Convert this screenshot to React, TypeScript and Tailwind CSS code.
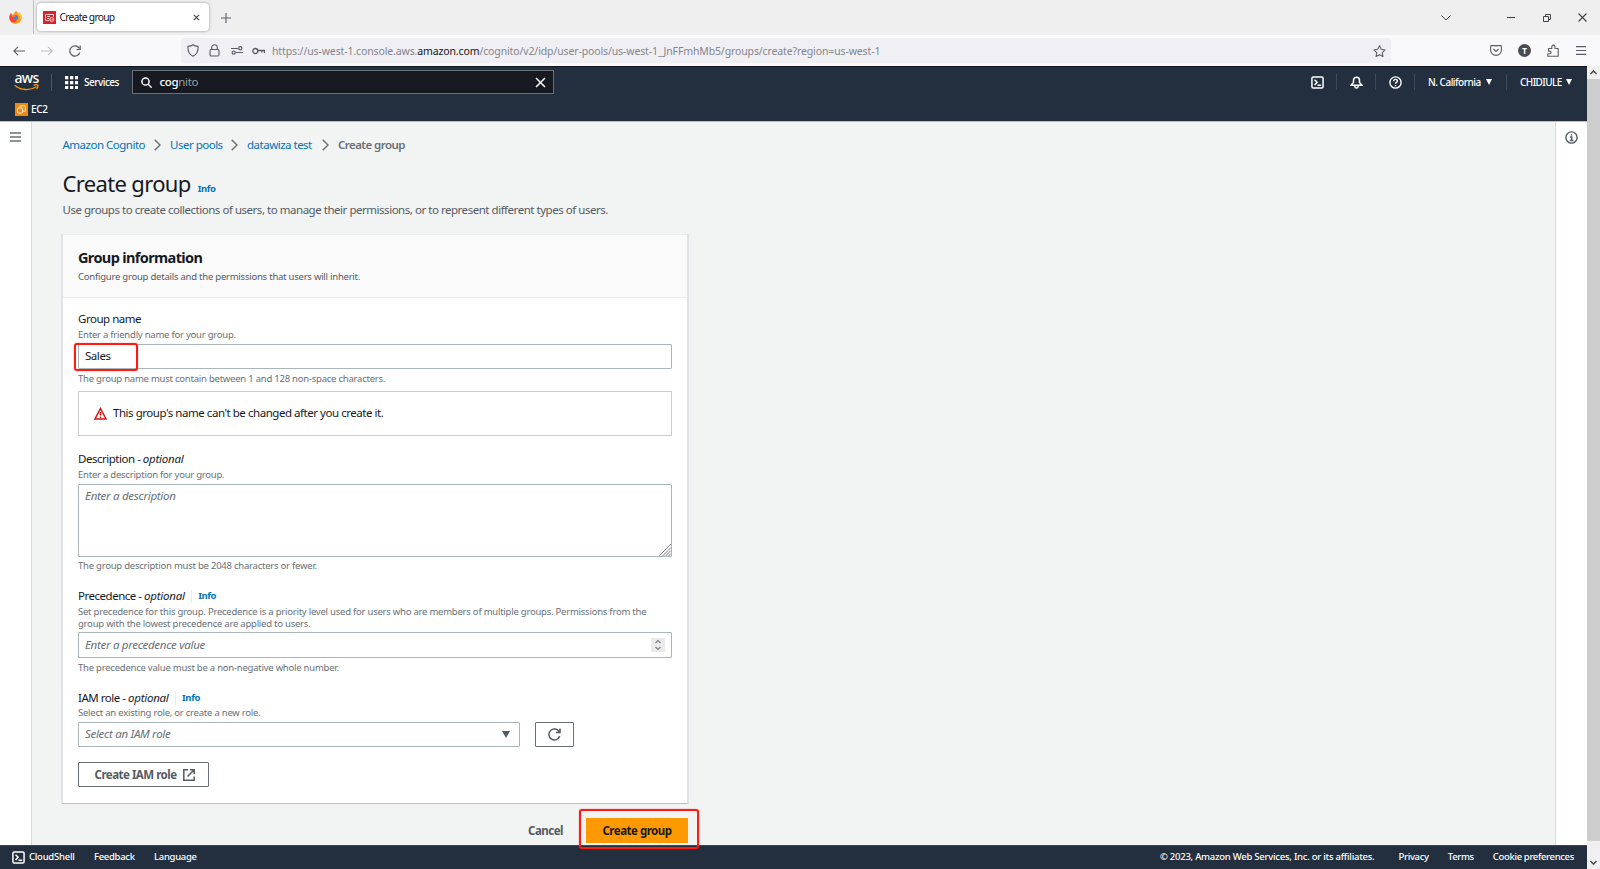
import { useState, type ReactNode } from 'react'
import clsx from 'clsx'

const FOOTER_LINKS = ['Terms', 'Cookie preferences']

function Caret({ className = 'h-[6px] w-[6px]' }: { className?: string }) {
  return (
    <svg viewBox="0 0 8 7" preserveAspectRatio="none" className={clsx('shrink-0', className)} fill="currentColor">
      <path d="M0 0h8L4 7z" />
    </svg>
  )
}

function CloudShellIcon() {
  return (
    <svg viewBox="0 0 14 14" className="size-[13px] shrink-0" fill="none" stroke="currentColor" strokeWidth="1.6">
      <rect x="1" y="1" width="12" height="12" rx="1.5" />
      <path d="M3.8 4 6.6 6.8 3.8 9.6M7 10h4" />
    </svg>
  )
}

function InfoLink() {
  return <a className="text-[9.5px] font-bold tracking-[-0.4px] text-[#0073bb]">Info</a>
}

function BrowserTabs() {
  return (
    <div className="flex h-[35px] items-center bg-[#efefef] text-[#15141a]">
      <div className="flex h-[34px] w-[34px] items-center justify-center self-start border-r border-[#c2c2c5]">
        <svg viewBox="0 0 16 16" className="ml-[-3px] size-[13px]">
          <path d="M15.3 5.4C14.7 3.8 13.4 2 12.3 1.6c.8 1.2 1 2 1 2.4C11.8 1.8 10 1.7 8.7 0 6.5 1.5 6 3 5.8 4.200c-.8 0-1.5.3-2.100.6C3 4 3 2.800 3.100 2.200 1.300 3.400.400 6 .4 8.300a7.600 7.600 0 0 0 15.200 0c0-1-.1-2-.3-2.900z" fill="#ff9a1f" />
          <path d="M.4 8.300C.5 6 1.300 3.800 2.600 2.800c0 1 .4 1.800 1.200 2.300-.4 1-.2 1.700 1 2.300-.9 3 2.500 5 5 3.600-1 2.400-4 3.500-6.500 2.900A7.500 7.500 0 0 1 .4 8.300z" fill="#ff3b3b" />
          <path d="M12.300 1.600c3 1.800 3.800 5.800 2.700 8.600-1.300-1-1.200-3-2-4.400C12.300 4.600 10 3 9.800 1.300c1.200 1.200 2.900 1.600 3.500 2.700 0-.8-.4-1.700-1-2.400z" fill="#ffd43a" />
          <circle cx="8" cy="8" r="3.1" fill="#4a7ed0" />
          <path d="M4.800 7.400c1.400-.4 3-.2 3.700-1.200-1-.8-2.100-1-3.300-.6z" fill="#ff7a22" />
        </svg>
      </div>
      <div className="ml-[3px] mb-px flex h-[28px] w-[172px] items-center rounded-[4px] bg-white pr-[9px] pl-[6px] shadow-[0_0_3px_rgba(0,0,0,0.4)]">
        <svg viewBox="0 0 13 13" className="size-[13px]" fill="none" stroke="#fff">
          <rect width="13" height="13" fill="#d6242d" stroke="none" />
          <path d="M2.5 9.5v-6h8v2.5M2.5 9.5H6M4 5.5h3M4 7.5h2" strokeWidth=".8" />
          <circle cx="8.8" cy="8.5" r="2" strokeWidth=".8" />
          <path d="m8 8.500.6.7 1.200-1.300" strokeWidth=".7" />
        </svg>
        <span className="mt-px ml-[3.5px] text-[10.25px] tracking-[-0.7px]">Create group</span>
        <svg viewBox="0 0 8 8" className="ml-auto size-[7px]" stroke="#3a3a44" strokeWidth="1.2">
          <path d="m1 1 6 6M7 1 1 7" />
        </svg>
      </div>
      <svg viewBox="0 0 10 10" className="ml-[12px] size-[10px]" stroke="#5b5b66" strokeWidth="1.1">
        <path d="M5 0v10M0 5h10" />
      </svg>
      <div className="ml-auto flex items-center pr-[13px] text-[#43434d]">
        <svg viewBox="0 0 10 6" className="h-[6px] w-[10px]" fill="none" stroke="currentColor">
          <path d="m.5.5 4.5 4.5L9.5.5" />
        </svg>
        <svg viewBox="0 0 8 8" className="ml-[56px] size-[8px]" stroke="currentColor" strokeWidth="1.1">
          <path d="M0 3.500h8" />
        </svg>
        <svg viewBox="0 0 8 8" className="ml-[28px] size-[8px]" fill="none" stroke="currentColor">
          <path d="M.5 2.500h5v5h-5zM2.500 2.500v-2h5v5h-2" />
        </svg>
        <svg viewBox="0 0 9 9" className="ml-[27px] size-[9px]" stroke="currentColor" strokeWidth="1.1">
          <path d="m.5.5 8 8M8.5.5l-8 8" />
        </svg>
      </div>
    </div>
  )
}

function BrowserToolbar() {
  return (
    <div className="flex h-[31px] items-center bg-[#f9f9fb] text-[#5b5b66]">
      <svg viewBox="0 0 12 10" className="ml-[13px] h-[10px] w-[12px]" fill="none" stroke="currentColor" strokeWidth="1.1">
        <path d="M12 5H1M5 .8.8 5 5 9.2" />
      </svg>
      <svg viewBox="0 0 12 10" className="ml-[16px] h-[10px] w-[12px]" fill="none" stroke="#bdbdc4" strokeWidth="1.1">
        <path d="M0 5h11M7 .8 11.2 5 7 9.2" />
      </svg>
      <svg viewBox="0 0 12 12" className="ml-[16px] size-[12px]" fill="none" stroke="currentColor" strokeWidth="1.2">
        <path d="M10.8 7.5A5.1 5.1 0 1 1 10.3 3.4M11.2.5v4H7.5" />
      </svg>
      <div className="ml-[100px] flex h-[25px] w-[1210px] items-center rounded-[3px] bg-[#f0f0f4] pr-[5px] pl-[6px]">
        <svg viewBox="0 0 12 13" className="h-[13px] w-[12px]" fill="none" stroke="currentColor" strokeWidth="1.1">
          <path d="M6 .7C4.6 1.8 3 2.2 1 2.4 .6 7 2.2 10.5 6 12.3 9.8 10.5 11.4 7 11 2.4 9 2.2 7.4 1.8 6 .7z" />
        </svg>
        <svg viewBox="0 0 11 13" className="ml-[10px] h-[13px] w-[11px]" fill="none" stroke="currentColor" strokeWidth="1.1">
          <rect x="1" y="5.5" width="9" height="6.5" rx="1.2" />
          <path d="M2.7 5.5V3.5a2.8 2.8 0 0 1 5.6 0v2" />
        </svg>
        <svg viewBox="0 0 12 9" className="ml-[11px] h-[9px] w-[12px]" fill="none" stroke="currentColor" strokeWidth="1.2">
          <path d="M0 2.500h7M5 6.500h7" />
          <circle cx="9.3" cy="2.3" r="1.6" />
          <circle cx="2.7" cy="6.6" r="1.6" />
        </svg>
        <svg viewBox="0 0 13 8" className="ml-[9px] h-[8px] w-[13px]" fill="none" stroke="currentColor" strokeWidth="1.3">
          <circle cx="3.3" cy="4" r="2.5" />
          <path d="M5.8 3.5H12.4V6M9.8 3.5v2" />
        </svg>
        <span className="mt-[2px] ml-[7px] text-[10.5px] tracking-[-0.125px] whitespace-nowrap text-[#84848c]">
          https://us-west-1.console.aws.<span className="text-[#15141a]">amazon.com</span>
          /cognito/v2/idp/user-pools/us-west-1_JnFFmhMb5/groups/create?region=us-west-1
        </span>
        <svg viewBox="0 0 14 13" className="ml-auto h-[12px] w-[13px]" fill="none" stroke="currentColor" strokeWidth="1.1" strokeLinejoin="round">
          <path d="m7 .8 1.9 3.900 4.200.6-3.100 3 .8 4.200L7 10.500l-3.800 2 .8-4.200-3.100-3 4.200-.6z" />
        </svg>
      </div>
      <div className="ml-auto flex items-center pr-[14px]">
        <svg viewBox="0 0 12 11" className="h-[11px] w-[12px]" fill="none" stroke="currentColor" strokeWidth="1.1">
          <path d="M1.5.6h9q.9 0 .9.9V5A5.4 5.4 0 0 1 .6 5V1.5q0-.9.9-.9z" />
          <path d="M3.5 4 6 6.4 8.5 4" />
        </svg>
        <span className="ml-[16px] flex size-[13px] items-center justify-center rounded-full bg-[#4a4a55] text-[8px] font-bold text-white">T</span>
        <svg viewBox="0 0 12 13" className="ml-[16px] h-[13px] w-[12px]" fill="none" stroke="currentColor" strokeWidth="1.1" strokeLinejoin="round">
          <path d="M.8 12.3h10.4V4.5H8V2.7a1.6 1.6 0 0 0-3.2 0v1.8H1.5v2.6h1.2a1.3 1.3 0 0 1 0 2.6H.8z" />
        </svg>
        <svg viewBox="0 0 10 9" className="ml-[17px] h-[9px] w-[10px]" stroke="currentColor" strokeWidth="1.1">
          <path d="M0 .6h10M0 4.500h10M0 8.400h10" />
        </svg>
      </div>
    </div>
  )
}

function AwsNav() {
  const [query, setQuery] = useState(true)

  return (
    <header className="h-[55px] border-t border-[#11161e] bg-[#232f3e] text-[10px] font-medium tracking-[-0.4px] text-white">
      <div className="flex h-[30px] items-center">
        <div className="ml-[14px] flex w-[25px] flex-col items-center">
          <span className="h-[11px] text-[14px] leading-[9px] font-medium tracking-[-0.7px]">aws</span>
          <svg viewBox="0 0 25 7" className="h-[7px] w-[25px]" fill="none" stroke="#ff9900" strokeWidth="1.3">
            <path d="M.7 1.2C7 6.5 16 6.8 22.5 2.8M19.5 1.3c2-.6 4-.5 4.3 0 .3.5-.2 2.500-1.300 3.700" />
          </svg>
        </div>
        <div className="ml-[12px] h-[17px] w-px bg-[#4b5765]" />
        <svg viewBox="0 0 13 13" className="ml-[13px] size-[13px]" fill="currentColor">
          {[0, 5, 10].map((y) => [0, 5, 10].map((x) => <rect key={`${x}-${y}`} x={x} y={y} width="3.3" height="3.3" />))}
        </svg>
        <span className="ml-[6px] w-[36px] tracking-[-0.5px] whitespace-nowrap">Services</span>
        <div className="ml-[12px] flex h-[24px] w-[422px] items-center border border-[#687078] bg-[#16191f] pr-[7px] pl-[8px]">
          <svg viewBox="0 0 11 11" className="size-[11px]" fill="none" stroke="currentColor" strokeWidth="1.5">
            <circle cx="4.5" cy="4.5" r="3.6" />
            <path d="m7.2 7.2 3.4 3.4" />
          </svg>
          {query && (
            <span className="ml-[7.5px] text-[11.5px] tracking-[-0.35px]">
              cog<span className="font-normal text-[#95a0ab]">nito</span>
            </span>
          )}
          <button className="ml-auto" onClick={() => setQuery(false)}>
            <svg viewBox="0 0 11 11" className="size-[11px]" stroke="currentColor" strokeWidth="1.5">
              <path d="m1 1 9 9M10 1l-9 9" />
            </svg>
          </button>
        </div>
        <div className="ml-auto flex items-center pr-[15px]">
          <CloudShellIcon />
          <div className="ml-[12px] h-[16px] w-px bg-[#3d4957]" />
          <svg viewBox="0 0 13 13" className="ml-[13px] size-[13px]" fill="none" stroke="currentColor" strokeWidth="1.5">
            <path d="M1 9.3h11L9.5 6.5V4.2a3 3 0 0 0-6 0v2.3zM4.9 9.5v1a1.6 1.6 0 0 0 3.2 0v-1" />
          </svg>
          <div className="ml-[12px] h-[16px] w-px bg-[#3d4957]" />
          <svg viewBox="0 0 13 13" className="ml-[13px] size-[13px]" fill="none" stroke="currentColor" strokeWidth="1.4">
            <circle cx="6.5" cy="6.5" r="5.6" />
            <path d="M4.600 5.200c0-2.400 3.800-2.400 3.800-.1 0 1.300-1.900 1.300-1.900 2.700M6.500 8.900v1.300" />
          </svg>
          <div className="ml-[12px] h-[16px] w-px bg-[#3d4957]" />
          <span className="ml-[13px] w-[53px] tracking-[-0.5px] whitespace-nowrap">N. California</span>
          <Caret className="ml-[5px] h-[6px] w-[6px]" />
          <div className="ml-[14px] h-[16px] w-px bg-[#3d4957]" />
          <span className="ml-[13px] w-[41px] tracking-[-0.6px] whitespace-nowrap">CHIDIULE</span>
          <Caret className="ml-[5px] h-[6px] w-[6px]" />
        </div>
      </div>
      <div className="flex h-[24px] items-center pl-[15px]">
        <svg viewBox="0 0 13 13" className="size-[13px]" fill="none" stroke="#fff" strokeWidth=".8">
          <rect width="13" height="13" fill="#ed8a14" stroke="none" />
          <rect x="2.5" y="5" width="5" height="5" rx="1" />
          <path d="M5 5V3.5q0-.7.7-.7h4q.7 0 .7.7v4q0 .7-.7.7H7.5" />
        </svg>
        <span className="ml-[3px] tracking-[-0.3px]">EC2</span>
      </div>
    </header>
  )
}

function Chevron() {
  return (
    <svg viewBox="0 0 7 12" className="mr-[9px] h-[12px] w-[7px] shrink-0" fill="none" stroke="#687078" strokeWidth="1.5">
      <path d="m.7.7 5.300 5.300-5.300 5.300" />
    </svg>
  )
}

function Breadcrumbs() {
  return (
    <nav className="flex h-[16px] items-center pl-[1.5px] text-[11.5px] tracking-[-0.5px] text-[#0073bb]">
      <a className="w-[91.5px] whitespace-nowrap">Amazon Cognito</a>
      <Chevron />
      <a className="w-[61px] whitespace-nowrap">User pools</a>
      <Chevron />
      <a className="w-[75px] whitespace-nowrap">datawiza test</a>
      <Chevron />
      <span className="font-semibold tracking-[-0.55px] text-[#687078]">Create group</span>
    </nav>
  )
}

function Label({ children, optional, info }: { children: ReactNode; optional?: boolean; info?: boolean }) {
  return (
    <div className="flex h-[16px] items-center text-[11.5px] tracking-[-0.48px] whitespace-nowrap">
      <span>
        {children}
        {optional && (
          <>
            {' '}
            - <i className="tracking-[-0.25px]">optional</i>
          </>
        )}
      </span>
      {info && (
        <span className="ml-[6px] flex h-[13px] items-center border-l border-[#eaeded] pl-[6.5px]">
          <InfoLink />
        </span>
      )}
    </div>
  )
}

function Hint({ children }: { children: ReactNode }) {
  return <p className="text-[9.5px] leading-[12.5px] tracking-[-0.23px] text-[#687078]">{children}</p>
}

function GroupForm() {
  return (
    <section className="h-[570px] w-[628px] border-x-2 border-b border-x-[#dfe3e6] border-b-[#b9c0c4] bg-white">
      <div className="h-[64px] border-y border-[#eaeded] bg-[#fafafa] px-[15px] pt-[12px]">
        <h2 className="text-[14.5px] leading-[20px] font-bold tracking-[-0.63px]">Group information</h2>
        <p className="mt-[3px] text-[9.5px] leading-[14px] tracking-[-0.23px] text-[#545b64]">
          Configure group details and the permissions that users will inherit.
        </p>
      </div>
      <div className="px-[15px] pt-[13px]">
        <Label>Group name</Label>
        <div className="pt-[2px]">
          <Hint>Enter a friendly name for your group.</Hint>
        </div>
        <div className="relative mt-[2.5px] flex h-[25px] items-center rounded-[1px] border border-[#aab7b8] pb-px pl-[6px] text-[11.5px] tracking-[-0.45px]">
          Sales
          <div className="absolute top-[-2px] left-[-5px] h-[28px] w-[64px] rounded-[3px] border-2 border-[#ff1a12] shadow-[0_0_1px_#ff1a12]" />
        </div>
        <div className="mt-[4px]">
          <Hint>The group name must contain between 1 and 128 non-space characters.</Hint>
        </div>
        <div className="mt-[5.5px] flex h-[45px] items-center border border-[#c9cdd0] pb-px pl-[15px] text-[11.5px] tracking-[-0.46px]">
          <svg viewBox="0 0 13 13" className="mr-[6px] size-[13px]" fill="none" stroke="#d91515" strokeWidth="1.5">
            <path d="M6.5 1.5 12 12H1zM6.5 5v3.500M6.5 9.5V11" />
          </svg>
          This group's name can't be changed after you create it.
        </div>

        <div className="mt-[15px]">
          <Label optional>Description</Label>
        </div>
        <div className="pt-[2px]">
          <Hint>Enter a description for your group.</Hint>
        </div>
        <div className="relative mt-[2.5px] h-[73px] rounded-[1px] border border-[#aab7b8] pt-[2px] pl-[6px] text-[11.5px] tracking-[-0.28px] text-[#687078] italic">
          Enter a description
          <svg viewBox="0 0 12 12" className="absolute right-0 bottom-0 size-[12px]" stroke="#6b6b75" strokeWidth=".9">
            <path d="M0 12 12 0M3.5 12 12 3.5M6.5 12 12 6.5M9.5 12 12 9.5" />
          </svg>
        </div>
        <div className="mt-[3px]">
          <Hint>The group description must be 2048 characters or fewer.</Hint>
        </div>

        <div className="mt-[15.5px]">
          <Label optional info>
            Precedence
          </Label>
        </div>
        <div className="pt-[1.5px]">
          <Hint>
            Set precedence for this group. Precedence is a priority level used for users who are members of multiple groups. Permissions from the
            group with the lowest precedence are applied to users.
          </Hint>
        </div>
        <div className="mt-[1.5px] flex h-[26px] items-center justify-between rounded-[1px] border border-[#aab7b8] pr-[6px] pl-[6px] text-[11.5px] tracking-[-0.3px] text-[#687078] italic">
          Enter a precedence value
          <svg viewBox="0 0 14 14" className="size-[14px]" fill="none" stroke="#7b8087" strokeWidth="1.2">
            <rect width="14" height="14" fill="#eaeaec" stroke="none" />
            <path d="m4.5 5 2.5-2.5L9.5 5M4.5 9 7 11.5 9.5 9" />
          </svg>
        </div>
        <div className="mt-[4px]">
          <Hint>The precedence value must be a non-negative whole number.</Hint>
        </div>

        <div className="mt-[15.5px]">
          <Label optional info>
            IAM role
          </Label>
        </div>
        <div className="pt-px">
          <Hint>Select an existing role, or create a new role.</Hint>
        </div>
        <div className="mt-[2.5px] flex gap-[15px]">
          <div className="flex h-[25px] w-[442px] items-center justify-between rounded-[1px] border border-[#aab7b8] pr-[9px] pb-px pl-[6px] text-[11.5px] tracking-[-0.3px] text-[#687078] italic">
            Select an IAM role
            <Caret className="h-[7px] w-[8px] text-[#545b64]" />
          </div>
          <button className="flex h-[25px] w-[39px] items-center justify-center rounded-[1px] border border-[#687078]">
            <svg viewBox="0 0 13 13" className="size-[13px]" fill="none" stroke="#545b64" strokeWidth="1.5">
              <path d="M11.7 8a5.5 5.5 0 1 1-.4-4M12 .5v4H8" />
            </svg>
          </button>
        </div>
        <button className="mt-[15px] flex h-[25px] w-[131px] items-center rounded-[1px] border border-[#687078] pl-[15.5px] text-[11.5px] font-bold tracking-[-0.5px] whitespace-nowrap text-[#545b64]">
          Create IAM role
          <svg viewBox="0 0 12 12" className="ml-auto mr-[13px] size-[12px]" fill="none" stroke="currentColor" strokeWidth="1.5">
            <path d="M5 .8H.8v10.400h10.400V7.500M7 .8h4.200V5M11.200.8 4.500 7.500" />
          </svg>
        </button>
      </div>
    </section>
  )
}

export default function App() {
  return (
    <div className="flex h-[869px] w-[1600px] flex-col overflow-hidden bg-white font-['Noto_Sans',sans-serif] text-[#16191f]">
      <BrowserTabs />
      <BrowserToolbar />
      <div className="flex h-[803px]">
        <div className="flex w-[1587px] flex-col">
          <AwsNav />
          <div className="flex h-[724px] border-t border-[#b9bec3] bg-[#f2f3f3]">
            <aside className="w-[32px] border-r border-[#d5dbdb] bg-white pt-[10px] pl-[10px]">
              <svg viewBox="0 0 11 10" className="h-[10px] w-[11px]" stroke="#687078" strokeWidth="1.7">
                <path d="M0 1h11M0 5h11M0 9h11" />
              </svg>
            </aside>
            <main className="flex-1 pt-[15px] pl-[29px]">
              <Breadcrumbs />
              <h1 className="mt-[16px] flex h-[28px] items-baseline gap-[7px] pl-[1.5px] text-[22px] leading-[28px] tracking-[-0.65px]">
                Create group <InfoLink />
              </h1>
              <p className="mt-[4px] pl-[1.5px] text-[11.5px] leading-[18px] tracking-[-0.47px] text-[#545b64]">
                Use groups to create collections of users, to manage their permissions, or to represent different types of users.
              </p>
              <div className="mt-[15px]">
                <GroupForm />
              </div>
              <div className="mt-[14px] flex w-[627px] items-center justify-end text-[11.5px] font-bold tracking-[-0.5px]">
                <button className="mr-[23px] text-[#545b64]">Cancel</button>
                <div className="relative">
                  <button className="h-[25px] w-[102px] bg-[#ff9900]">Create group</button>
                  <div className="absolute top-[-9px] left-[-7px] z-10 h-[40px] w-[120px] rounded-[3px] border-2 border-[#ff1a12] shadow-[0_0_1px_#ff1a12]" />
                </div>
              </div>
            </main>
            <aside className="w-[32px] border-l border-[#d5dbdb] bg-white pt-[9px] pl-[9px]">
              <svg viewBox="0 0 13 13" className="size-[13px]" fill="none" stroke="#545b64" strokeWidth="1.4">
                <circle cx="6.5" cy="6.5" r="5.6" />
                <path d="M6.5 3v1.500M5 6h1.700v3.300M4.800 9.500h3.600" />
              </svg>
            </aside>
          </div>
          <footer className="flex h-[24px] items-center border-t border-[#3d4855] bg-[#232f3e] pr-[13px] pl-[12px] text-[9.5px] font-medium tracking-[-0.3px] whitespace-nowrap text-white">
            <CloudShellIcon />
            <span className="ml-[4px] w-[65px] tracking-[-0.25px]">CloudShell</span>
            <span className="w-[60px]">Feedback</span>
            <span>Language</span>
            <span className="ml-auto tracking-[-0.25px]">© 2023, Amazon Web Services, Inc. or its affiliates.</span>
            <a className="ml-[24px]">Privacy</a>
            {FOOTER_LINKS.map((link) => (
              <a key={link} className="ml-[19px] tracking-[-0.35px]">
                {link}
              </a>
            ))}
          </footer>
        </div>
        <div className="flex w-[13px] flex-col items-center bg-[#f0f0f0]">
          <svg viewBox="0 0 13 13" className="size-[13px]" fill="none" stroke="#505050" strokeWidth="1.6">
            <path d="M3.5 8 6.5 5l3 3" />
          </svg>
          <div className="h-[762px] w-full bg-[#cdcdcd]" />
          <svg viewBox="0 0 13 13" className="mt-auto size-[13px]" fill="none" stroke="#505050" strokeWidth="1.6">
            <path d="m3.5 5 3 3 3-3" />
          </svg>
        </div>
      </div>
    </div>
  )
}
